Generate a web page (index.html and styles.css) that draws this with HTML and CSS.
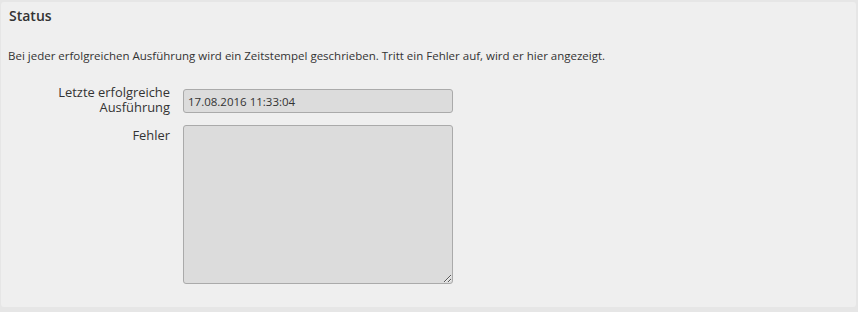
FILE: index.html
```html
<!DOCTYPE html>
<html lang="de">
<head>
<meta charset="utf-8">
<title>Status</title>
<link rel="stylesheet" href="styles.css">
</head>
<body>
<section class="panel">
  <h2 class="panel-title">Status</h2>
  <p class="panel-desc">Bei jeder erfolgreichen Ausführung wird ein Zeitstempel geschrieben. Tritt ein Fehler auf, wird er hier angezeigt.</p>
  <div class="form">
    <label class="form-label" for="last">Letzte erfolgreiche Ausführung</label>
    <input class="form-input" id="last" type="text" value="17.08.2016 11:33:04" readonly>
    <label class="form-label form-label-second" for="err">Fehler</label>
    <textarea class="form-textarea" id="err" readonly></textarea>
  </div>
</section>
</body>
</html>
```
FILE: styles.css
```css
html, body {
  margin: 0;
  padding: 0;
}
body {
  background: #e6e6e6;
  font-family: "Open Sans", "DejaVu Sans", sans-serif;
  color: #333;
  width: 858px;
  height: 312px;
  overflow: hidden;
}
.panel {
  margin: 2px 2px 0 1px;
  height: 305px;
  box-sizing: border-box;
  background: #efefef;
  border-radius: 3px;
  padding-top: 4px;
}
.panel-title {
  margin: 0;
  padding-left: 8px;
  font-size: 14px;
  font-weight: 600;
  line-height: 20px;
  color: #333;
}
.panel-desc {
  margin: 22px 0 0 0;
  padding-left: 7px;
  font-size: 11.5px;
  line-height: 16px;
  color: #333;
}
.form {
  display: grid;
  grid-template-columns: 169px 270px;
  grid-template-rows: 30px 159px;
  column-gap: 13px;
  row-gap: 10px;
  margin-top: 21px;
}
.form-label {
  text-align: right;
  font-size: 12.9px;
  line-height: 15px;
  color: #333;
}
.form-label-second {
  padding-top: 3px;
}
.form-input {
  margin: 4px 0 0 0;
  width: 270px;
  height: 24px;
  box-sizing: border-box;
  border: 1px solid #aaa;
  border-radius: 3px;
  background: #dcdcdc;
  font-family: "Open Sans", "DejaVu Sans", sans-serif;
  font-size: 11.5px;
  color: #333;
  padding: 0 4px;
  outline: none;
}
.form-textarea {
  display: block;
  width: 270px;
  height: 159px;
  box-sizing: border-box;
  border: 1px solid #aaa;
  border-radius: 3px;
  background: #dcdcdc;
  font-family: "Open Sans", "DejaVu Sans", sans-serif;
  font-size: 12px;
  color: #333;
  padding: 4px;
  margin: 0;
  outline: none;
}
```
